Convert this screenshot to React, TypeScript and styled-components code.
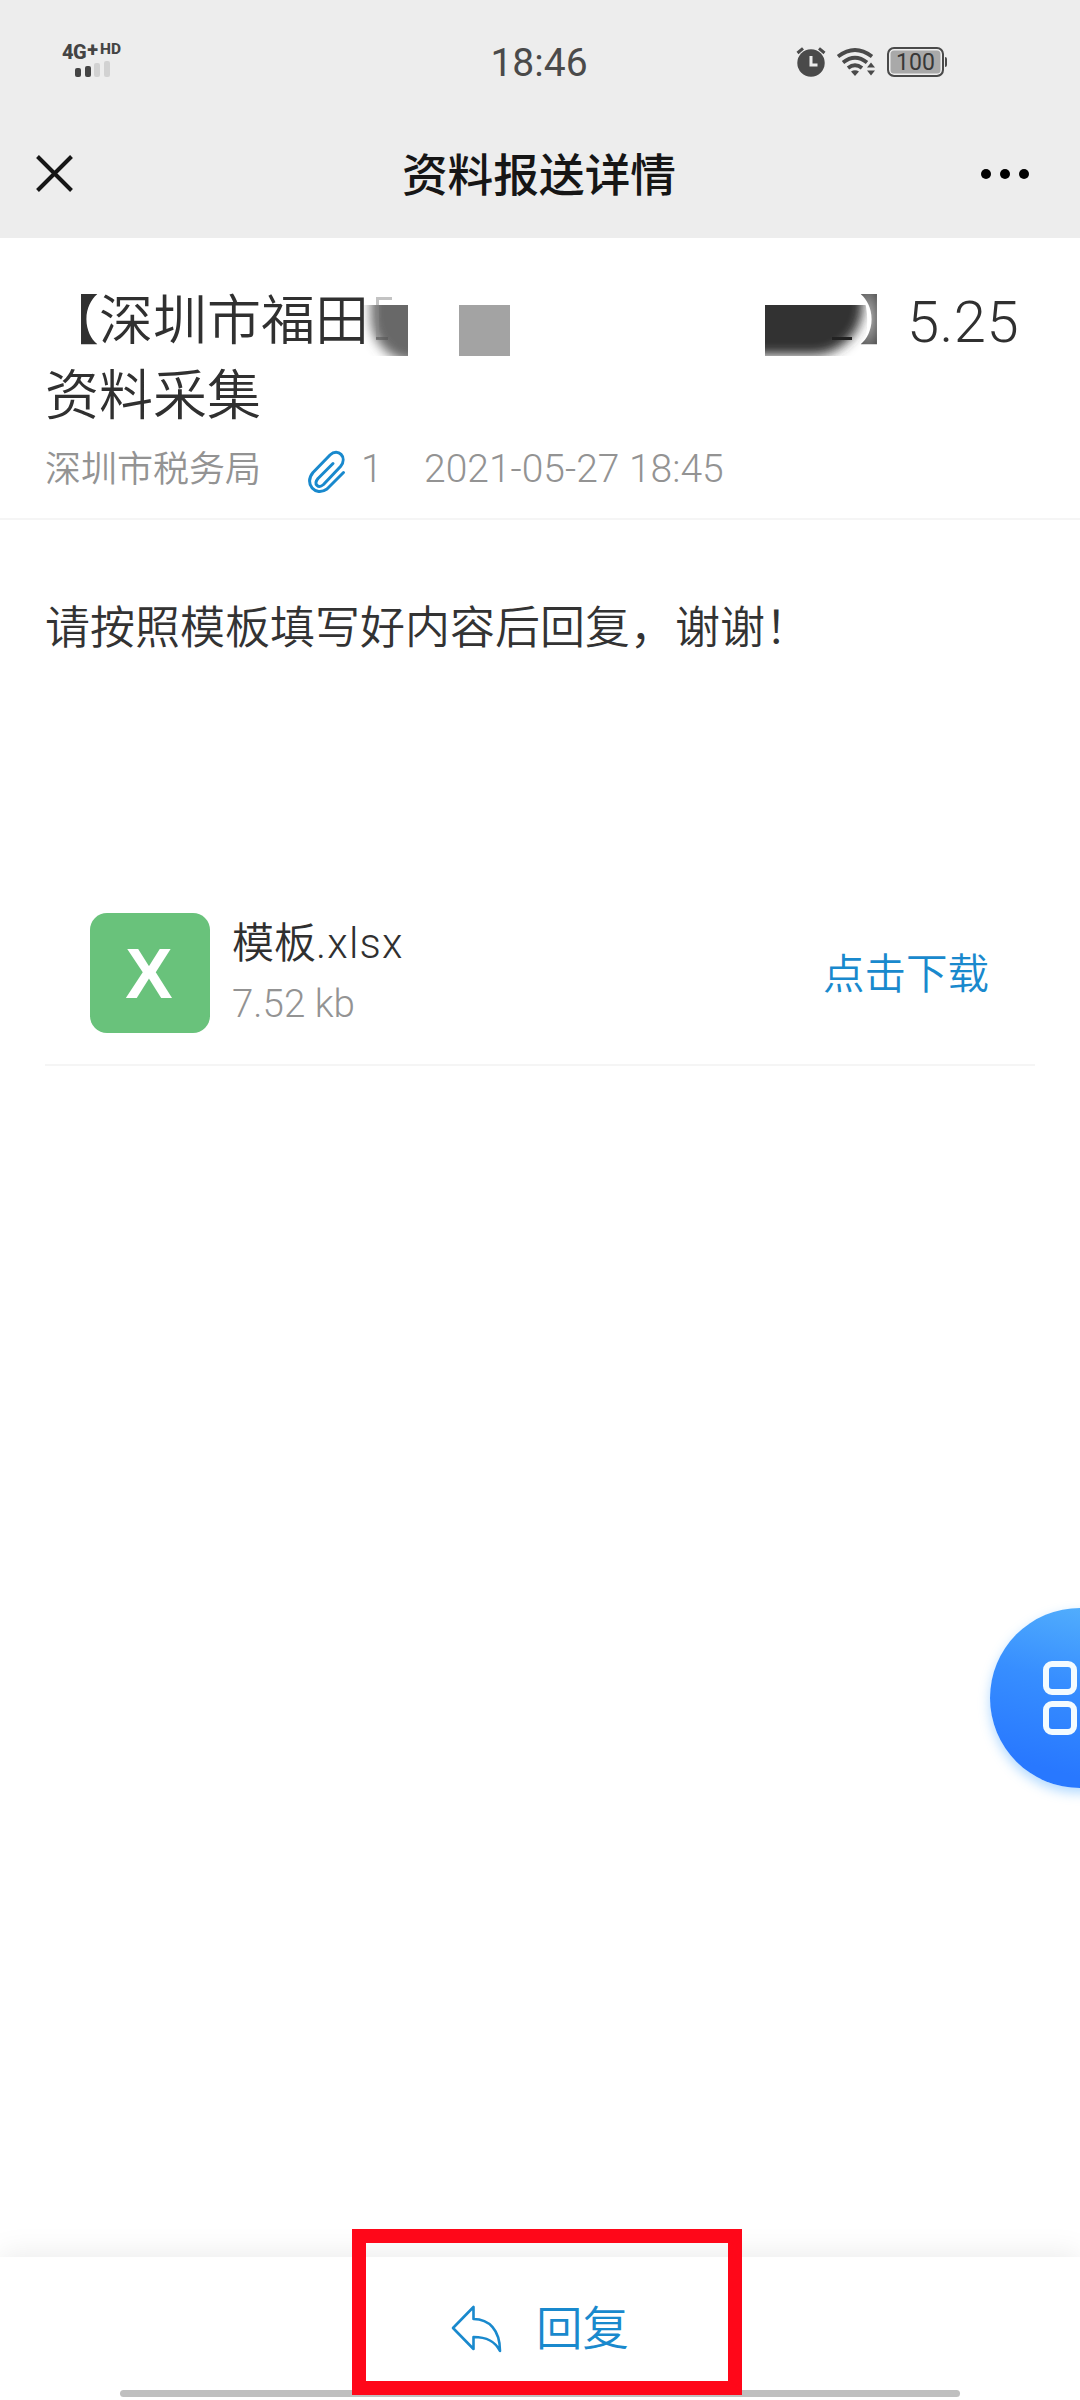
import React from "react";
import styled, { createGlobalStyle } from "styled-components";

const latin = `Roboto, "Noto Sans CJK SC", sans-serif`;
const blue = "#1989cd";

const GlobalStyle = createGlobalStyle`
  * { box-sizing: border-box; }
  body { margin: 0; background: #fff; font-family: ${latin}; color: #333; }
`;

const Page = styled.div`
  width: 1080px;
  height: 2400px;
  display: flex;
  flex-direction: column;
  position: relative;
  overflow: hidden;
  background: #fff;
  white-space: nowrap;
`;

const Top = styled.header`
  height: 238px;
  background: #ededed;
  flex: none;
`;

const StatusBar = styled.div`
  height: 124px;
  padding: 0 133px 0 62px;
  display: grid;
  grid-template-columns: 1fr auto 1fr;
  align-items: center;
`;

const Signal = styled.div`
  display: flex;
  flex-direction: column;
  gap: 2px;
  color: #444;
  margin-top: -3px;
`;

const Network = styled.div`
  display: flex;
  align-items: flex-start;
  height: 15px;
  font-weight: 800;
  font-size: 20px;
  line-height: 16px;
  letter-spacing: -0.5px;
`;

const NetworkSup = styled.span<{ $size: number; $gap: number }>`
  font-size: ${(p) => p.$size}px;
  line-height: 10px;
  margin-left: ${(p) => p.$gap}px;
  letter-spacing: 0;
`;

const Bars = styled.div`
  display: flex;
  align-items: flex-end;
  gap: 3.5px;
  padding-left: 13px;
  height: 16px;
`;

const Bar = styled.i<{ $h: number; $on?: boolean }>`
  width: 6px;
  height: ${(p) => p.$h}px;
  border-radius: 2px;
  background: ${(p) => (p.$on ? "#444" : "#d2d2d2")};
`;

const Clock = styled.time`
  font-size: 39px;
  line-height: 46px;
  color: #4a4a4a;
  padding: 1px 0 0 69px;
`;

const Indicators = styled.div`
  display: flex;
  justify-content: flex-end;
  align-items: center;
`;

const BatteryBody = styled.div`
  width: 57px;
  height: 30px;
  margin-left: 11px;
  border: 2.5px solid #4a4a4a;
  border-radius: 7px;
  background: #a9a9a9;
  box-shadow: inset 0 0 0 1.5px #eee;
  color: #383838;
  font-size: 23px;
  line-height: 27px;
  text-align: center;
`;

const BatteryTip = styled.i`
  width: 2px;
  height: 10px;
  margin-left: 1px;
  border-radius: 0 2px 2px 0;
  background: #4a4a4a;
`;

const NavBar = styled.div`
  height: 100px;
  padding: 0 50px 0 36px;
  display: flex;
  align-items: center;
  justify-content: space-between;
`;

const NavTitle = styled.h1`
  margin: 6px 0 0 24px;
  font-size: 45.7px;
  line-height: 60px;
  font-weight: 500;
  color: #161616;
`;

const Heading = styled.section`
  height: 282px;
  padding: 46px 0 0 45px;
  border-bottom: 2px solid #f5f5f5;
  flex: none;
`;

const Title = styled.h2`
  margin: 0;
  font-size: 54px;
  line-height: 76px;
  font-weight: 350;
  color: #303030;
`;

const TitleRow = styled.div`
  display: flex;
  height: 75px;
`;

const Redaction = styled.svg`
  display: block;
  flex: none;
  margin-left: -5px;
`;

const ClosingBracket = styled.span`
  margin: 0 21px 0 -12px;
  font-feature-settings: "halt";
  color: transparent;
  background: radial-gradient(ellipse 18px 42px at 9px 34px, #b4b4b4, #3a3a3a);
  background-clip: text;
  -webkit-background-clip: text;
`;

const TitleNumber = styled.span`
  font-size: 58px;
  font-weight: 350;
  letter-spacing: 0.4px;
`;

const Meta = styled.div`
  margin-top: 10px;
  display: flex;
  align-items: center;
  height: 50px;
  color: #939393;
  font-size: 39px;
  font-weight: 350;
`;

const Sender = styled.span`
  font-size: 36px;
  width: 262px;
  font-weight: 350;
  line-height: 46px;
  margin-top: 2px;
`;

const Count = styled.span`
  width: 77px;
  padding-left: 14px;
`;

const Message = styled.p`
  margin: 0;
  padding: 75px 0 0 45px;
  height: 355px;
  font-size: 45px;
  line-height: 68px;
  font-weight: 350;
  color: #333;
`;

const Attachment = styled.div`
  margin: 0 45px;
  padding: 38px 45px 0;
  height: 191px;
  display: flex;
  align-items: flex-start;
  border-bottom: 2px solid #f5f5f5;
`;

const FileBadge = styled.div`
  width: 120px;
  height: 120px;
  border-radius: 17px;
  background: #69c27b;
  color: #fff;
  font-family: "Liberation Sans", Arial, sans-serif;
  font-weight: 700;
  font-size: 71px;
  line-height: 121px;
  text-align: center;
  padding-right: 2px;
`;

const FileInfo = styled.div`
  flex: 1;
  padding-left: 22px;
`;

const FileName = styled.div`
  font-size: 42px;
  line-height: 61px;
  height: 60px;
  font-weight: 350;
  color: #303030;
`;

const Extension = styled.span`
  letter-spacing: 1.2px;
`;

const FileSize = styled.div`
  font-size: 38.5px;
  line-height: 61px;
  font-weight: 350;
  color: #939393;
`;

const Download = styled.a`
  font-size: 41.5px;
  line-height: 124px;
  font-weight: 350;
  color: ${blue};
  margin-right: 1px;
`;

const FloatingMenu = styled.button`
  position: absolute;
  left: 990px;
  top: 1608px;
  width: 180px;
  height: 180px;
  padding: 53px;
  border: 0;
  border-radius: 50%;
  background: linear-gradient(195deg, #55b2fc 5%, #378eff 45%, #2878ff 85%);
  box-shadow: 0 5px 12px rgba(60, 160, 255, 0.4);
  display: grid;
  grid-template-columns: 34px 34px;
  grid-auto-rows: 34px;
  gap: 6px;
`;

const Tile = styled.i`
  border: 6px solid #f3fbff;
  border-radius: 9px;
`;

const Footer = styled.footer`
  margin-top: auto;
  height: 143px;
  flex: none;
  position: relative;
  background: #fff;
  box-shadow: 0 -4px 28px rgba(0, 0, 0, 0.08);
  display: flex;
  justify-content: center;
`;

const Reply = styled.button`
  display: flex;
  align-items: center;
  gap: 34px;
  height: 144px;
  padding: 0;
  border: 0;
  background: none;
  color: ${blue};
  font: 350 46.5px/60px ${latin};
`;

const HomeIndicator = styled.div`
  position: absolute;
  left: 120px;
  bottom: 3px;
  width: 840px;
  height: 7px;
  border-radius: 4px;
  background: #bfbfbf;
`;

const Highlight = styled.div`
  position: absolute;
  left: 352px;
  top: 2229px;
  width: 390px;
  height: 166px;
  border: 14px solid #ff0719;
`;

const WifiSvg = styled.svg`
  margin-left: 10px;
`;

const AlarmIcon = () => (
  <svg width="30" height="30" viewBox="0 0 30 30">
    <circle cx="15" cy="16" r="13.7" fill="#4a4a4a" />
    <path d="M1.5 6 7 1.3M28.5 6 23 1.3" stroke="#4a4a4a" strokeWidth="3" />
    <path d="M15 9v9h6.5" fill="none" stroke="#ededed" strokeWidth="3" />
  </svg>
);

const WifiIcon = () => (
  <WifiSvg width="40" height="30" viewBox="0 0 40 30">
    <g fill="none" stroke="#4a4a4a" strokeWidth="3.8">
      <path d="M2 9.5Q19 -3.5 36 9.5" />
      <path d="M7 15.5Q19 6 31 15.5" />
      <path d="M12 21Q19 15.5 26 21" />
    </g>
    <path d="M15 24.5Q19 22 23 24.5L19 29ZM31 20.5h8L35 15.5ZM31 23.5h8L35 28.5Z" fill="#4a4a4a" />
  </WifiSvg>
);

const CloseIcon = () => (
  <svg width="38" height="38" viewBox="0 0 38 38">
    <path d="M1.5 1.5 35.5 35.5M35.5 1.5 1.5 35.5" stroke="#161616" strokeWidth="4" />
  </svg>
);

const MoreIcon = () => (
  <svg width="50" height="12" viewBox="0 0 50 12">
    <circle cx="6" cy="6" r="5" />
    <circle cx="25" cy="6" r="5" />
    <circle cx="44" cy="6" r="5" />
  </svg>
);

const ClipSvg = styled.svg`
  margin-top: 5px;
`;

const ClipIcon = () => (
  <ClipSvg width="40" height="44" viewBox="0 0 40 44" fill="none" stroke={blue} strokeWidth="3" strokeLinecap="round" strokeLinejoin="round">
    <path d="M26 13.5 11 28.5C6 34.5 11.500 39 16.500 34.500L33.500 16.500C41 7 31 -2.500 23 5L6 22.500C-3.500 34 8.500 47 20 39L36.500 22.500" />
  </ClipSvg>
);

const ReplyIcon = () => (
  <svg width="51" height="48" viewBox="0 0 51 48" fill="none" stroke={blue} strokeWidth="2.6" strokeLinejoin="round">
    <path d="M22.500 2V14C38 14 49 25 49 46C44 36 36 32 22.500 32V44L2 23Z" />
  </svg>
);

const RedactionMarks = () => (
  <Redaction width="507" height="76" viewBox="364 285 507 76">
    <defs>
      <filter id="soft" x="-20%" y="-20%" width="140%" height="140%">
        <feGaussianBlur stdDeviation="6" />
      </filter>
      <clipPath id="left">
        <rect x="364" y="306" width="44" height="51" />
      </clipPath>
      <clipPath id="right">
        <rect x="765" y="306" width="103" height="51" />
      </clipPath>
    </defs>
    <g clipPath="url(#left)">
      <rect x="371" y="250" width="90" height="113" rx="44" fill="#686868" filter="url(#soft)" />
    </g>
    <path d="M377.500 340V299.500H392" fill="none" stroke="#888" strokeOpacity="0.5" strokeWidth="3" />
    <path d="M376 339.500H388" stroke="#555" strokeOpacity="0.6" strokeWidth="3" />
    <rect x="459" y="306" width="51" height="51" fill="#a3a3a3" />
    <g clipPath="url(#right)">
      <rect x="690" y="225" width="173" height="131" rx="50" fill="#333" filter="url(#soft)" />
    </g>
    <path d="M832 339.500H852" stroke="#222" strokeWidth="3" />
    <path d="M864 294Q873 320 865 347" fill="none" stroke="#fff" strokeWidth="3" />
  </Redaction>
);

export default function App() {
  return (
    <Page>
      <GlobalStyle />
      <Top>
        <StatusBar>
          <Signal>
            <Network>
              4G
              <NetworkSup $size={20} $gap={1}>+</NetworkSup>
              <NetworkSup $size={15.5} $gap={2}>HD</NetworkSup>
            </Network>
            <Bars>
              <Bar $h={9} $on />
              <Bar $h={11} $on />
              <Bar $h={14} />
              <Bar $h={16} />
            </Bars>
          </Signal>
          <Clock>18:46</Clock>
          <Indicators>
            <AlarmIcon />
            <WifiIcon />
            <BatteryBody>100</BatteryBody>
            <BatteryTip />
          </Indicators>
        </StatusBar>
        <NavBar>
          <CloseIcon />
          <NavTitle>资料报送详情</NavTitle>
          <MoreIcon />
        </NavBar>
      </Top>
      <Heading>
        <Title>
          <TitleRow>
            <span>【深圳市福田</span>
            <RedactionMarks />
            <ClosingBracket>】</ClosingBracket>
            <TitleNumber>5.25</TitleNumber>
          </TitleRow>
          <TitleRow>资料采集</TitleRow>
        </Title>
        <Meta>
          <Sender>深圳市税务局</Sender>
          <ClipIcon />
          <Count>1</Count>
          <span>2021-05-27 18:45</span>
        </Meta>
      </Heading>
      <Message>请按照模板填写好内容后回复，谢谢！</Message>
      <Attachment>
        <FileBadge>X</FileBadge>
        <FileInfo>
          <FileName>模板<Extension>.xlsx</Extension></FileName>
          <FileSize>7.52 kb</FileSize>
        </FileInfo>
        <Download>点击下载</Download>
      </Attachment>
      <FloatingMenu aria-label="menu">
        <Tile />
        <Tile />
        <Tile />
        <Tile />
      </FloatingMenu>
      <Footer>
        <Reply>
          <ReplyIcon />
          回复
        </Reply>
        <HomeIndicator />
      </Footer>
      <Highlight />
    </Page>
  );
}
